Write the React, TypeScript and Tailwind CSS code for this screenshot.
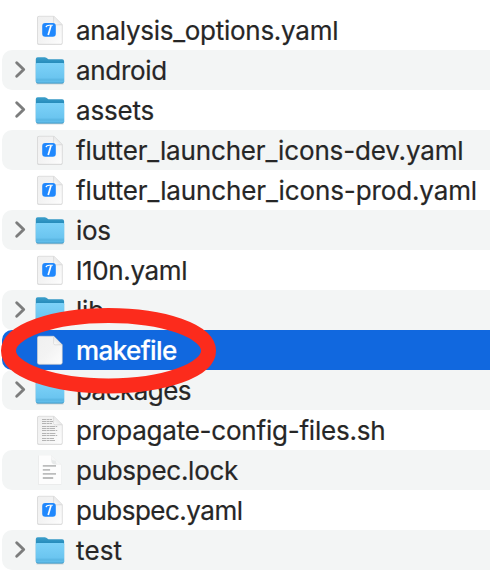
type Kind = "folder" | "yaml" | "blank" | "script" | "lock";

interface Entry {
  name: string;
  kind: Kind;
  tracking: string;
}

const entries: Entry[] = [
  { name: "analysis_options.yaml", kind: "yaml", tracking: "tracking-[-0.27px]" },
  { name: "android", kind: "folder", tracking: "tracking-[-0.3px]" },
  { name: "assets", kind: "folder", tracking: "tracking-[-0.2px]" },
  { name: "flutter_launcher_icons-dev.yaml", kind: "yaml", tracking: "tracking-[-0.15px]" },
  { name: "flutter_launcher_icons-prod.yaml", kind: "yaml", tracking: "tracking-[-0.12px]" },
  { name: "ios", kind: "folder", tracking: "tracking-[-0.3px]" },
  { name: "l10n.yaml", kind: "yaml", tracking: "tracking-[-0.35px]" },
  { name: "lib", kind: "folder", tracking: "tracking-[-0.2px]" },
  { name: "makefile", kind: "blank", tracking: "tracking-[-0.6px]" },
  { name: "packages", kind: "folder", tracking: "tracking-[-0.55px]" },
  { name: "propagate-config-files.sh", kind: "script", tracking: "tracking-[-0.22px]" },
  { name: "pubspec.lock", kind: "lock", tracking: "tracking-[-0.28px]" },
  { name: "pubspec.yaml", kind: "yaml", tracking: "tracking-[-0.5px]" },
  { name: "test", kind: "folder", tracking: "tracking-[0.15px]" },
];

function IconDefs() {
  return (
    <svg className="absolute size-0" aria-hidden="true">
      <defs>
        <linearGradient id="folderFront" x1="0" y1="0" x2="0" y2="1">
          <stop offset="0" stopColor="#7dd2f8" />
          <stop offset="1" stopColor="#64c0ed" />
        </linearGradient>
        <linearGradient id="folderBack" x1="0" y1="0" x2="0" y2="1">
          <stop offset="0" stopColor="#3c9fcb" />
          <stop offset="0.3" stopColor="#2288b8" />
          <stop offset="1" stopColor="#368fb9" />
        </linearGradient>
        <linearGradient id="paper" x1="0" y1="0" x2="1" y2="1">
          <stop offset="0" stopColor="#f0f0f0" />
          <stop offset="0.5" stopColor="#f3f3f3" />
          <stop offset="1" stopColor="#fdfdfd" />
        </linearGradient>
        <linearGradient id="fold" x1="0" y1="1" x2="1" y2="0">
          <stop offset="0" stopColor="#ffffff" />
          <stop offset="0.5" stopColor="#e9e9e9" />
          <stop offset="1" stopColor="#cccccc" />
        </linearGradient>
      </defs>
    </svg>
  );
}

function FolderIcon() {
  return (
    <svg className="size-10" viewBox="0 0 40 40">
      <path d="M6.5 33.7h27" stroke="#8f9a9e" strokeWidth="1.2" opacity=".55" />
      <path
        d="M5.8 8.9q0-1.7 1.9-1.7h7.1q.8 0 1.5.6l1.4 1q.6.5 1.5.5h12.9q2 0 2 2V31H5.8Z"
        fill="url(#folderBack)"
      />
      <path d="M5.8 14.3q0-1.2 1.2-1.2h26q1.2 0 1.2 1.2V31.3q0 2-2 2H7.8q-2 0-2-2Z" fill="url(#folderFront)" />
      <path d="M6 29.2h28M6 30.8h28" stroke="#4ea9d6" strokeWidth=".6" />
      <path d="M6.2 31.8q.4 1.2 1.7 1.2h24.2q1.3 0 1.7-1.2" fill="none" stroke="#3e9bca" strokeWidth=".9" />
    </svg>
  );
}

function FileIcon({ kind }: { kind: Kind }) {
  if (kind === "lock") {
    return (
      <svg className="size-10" viewBox="0 0 40 40">
        <path d="M8.4 5.5h13l9.8 9.3v20H8.4Z" fill="#dfe1e1" />
        <path d="M8.8 5.2h12.5l9.8 9.5v19.5H8.8Z" fill="#fdfdfd" />
        <path d="M21.3 5.2v5.3q0 4 4 4h5.8Z" fill="#e8eaea" />
        <path d="M21.4 5.4q-.2 4.2 1.2 4.8l3.2.6q.2 3.4 1.9 3.7h3.2" fill="#f5f6f6" />
        <path d="M12.8 15.8H26M12.8 19.8h7.3M12.8 23.9H26M12.8 28h10.4" stroke="#bcbdbd" strokeWidth="1.8" />
      </svg>
    );
  }
  return (
    <svg className="size-10" viewBox="0 0 40 40">
      <path
        d="M7 8q0-2 2-2h15l8.6 8.5V33q0 2-2 2H9q-2 0-2-2Z"
        fill="#a7a7a7"
        opacity=".4"
      />
      <path
        d="M7.5 8q0-1.8 1.8-1.8h14.4l8.5 8.6V32.5q0 1.7-1.7 1.7H9.3q-1.8 0-1.8-1.7Z"
        fill="url(#paper)"
        stroke="#d2d2d2"
        strokeWidth=".5"
      />
      {kind === "script" && (
        <path
          d="M12 9.5h10M12 11.5h11M12 13.5h10M12 16.5h15.2M12 18.5h13.5M12 20.5h15.2M12 23.5h14M12 25.5h15.2M12 28.5h12M12 30.5h13"
          stroke="#b4b4b4"
          strokeWidth="1.1"
          strokeDasharray="4.3 .5 2.6 .4 5.2 .6"
        />
      )}
      <path d="M23.5 6.2v7q0 1.7 1.7 1.7h7Z" fill="url(#fold)" />
      <path d="M23.6 6.4v7q0 1.4 1.4 1.4h7" fill="none" stroke="#c8c8c8" strokeWidth=".5" />
      {kind === "yaml" && (
        <g>
          <rect x="12.2" y="13.1" width="13.6" height="13.6" rx="3" fill="#2088fd" />
          <path d="m21 15.4-2.8 9.6" stroke="#ffffff" strokeWidth="1.7" />
          <path d="m15.8 17 1.2-1.2 2.4-.6 3.4.1" fill="none" stroke="#ffffff" strokeWidth="1.1" />
        </g>
      )}
    </svg>
  );
}

function Chevron() {
  return (
    <svg className="h-10 w-5" viewBox="0 0 20 40" fill="none">
      <path d="m6.7 12.7 7 6.8-7 6.8" stroke="#7c7d7d" strokeWidth="2.9" strokeLinecap="round" strokeLinejoin="round" />
    </svg>
  );
}

function Row({ entry, index }: { entry: Entry; index: number }) {
  const selected = entry.kind === "blank";
  const background = selected ? "bg-[#1168df] text-white" : index % 2 ? "bg-[#f3f5f5] text-[#262626]" : "bg-white text-[#262626]";
  return (
    <li className={`flex h-10 items-center rounded-l-[10px] pl-2 ${background}`}>
      <span className="w-5 shrink-0">{entry.kind === "folder" && <Chevron />}</span>
      <span className="size-10 shrink-0">{entry.kind === "folder" ? <FolderIcon /> : <FileIcon kind={entry.kind} />}</span>
      <span
        className={`ml-[6px] pt-[2px] text-[26px] leading-[38px] whitespace-nowrap font-['Inter',sans-serif] [-webkit-text-stroke:0.2px_currentColor] ${entry.tracking} ${selected ? "font-medium" : "font-normal"}`}
      >
        {entry.name}
      </span>
    </li>
  );
}

export default function App() {
  return (
    <main className="relative h-[572px] w-[490px] overflow-hidden bg-white pt-[10px] pl-[2px]">
      <IconDefs />
      <ul>
        {entries.map((entry, index) => (
          <Row key={entry.name} entry={entry} index={index} />
        ))}
      </ul>
      <svg className="pointer-events-none absolute top-[300px] left-0 h-[100px] w-[220px]" viewBox="0 0 220 100">
        <ellipse cx="108.5" cy="50.7" rx="100" ry="35.3" fill="none" stroke="#fc2b1c" strokeWidth="15" />
      </svg>
    </main>
  );
}
